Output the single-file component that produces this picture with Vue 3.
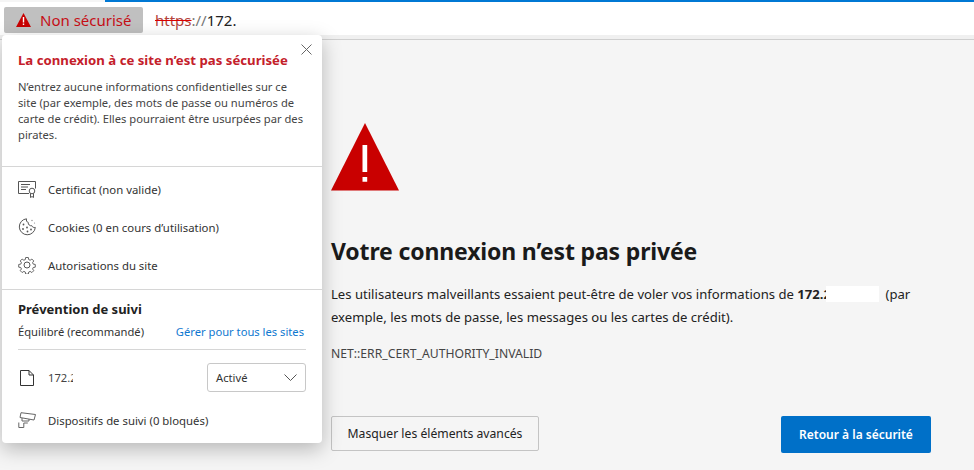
<script setup>
const rows = [
  { icon: 'cert', label: 'Certificat (non valide)' },
  { icon: 'cookie', label: 'Cookies (0 en cours d\u2019utilisation)' },
  { icon: 'gear', label: 'Autorisations du site' }
]
</script>

<template>
  <div class="screen">
    <div class="progress"></div>
    <header class="address">
      <div class="badge">
        <svg class="badge-icon" width="15" height="14" viewBox="0 0 15 14"><path d="M7.5 0 15 14H0Z" fill="#c80000"/><path d="M6.800 4h1.400v5.600H6.800zM6.800 10.600h1.400V12H6.800z" fill="#fff"/></svg>
        <span>Non sécurisé</span>
      </div>
      <div class="url"><s class="scheme">https</s><span class="slashes">://</span>172.</div>
    </header>
    <div class="rule"></div>

    <main class="page">
      <svg class="alert" width="68" height="68" viewBox="0 0 68 68"><path d="M34 0 68 67.500H0Z" fill="#c90000"/><path d="M31.500 22h4.700v27h-4.700zM31.500 54h4.700v4.700h-4.700z" fill="#fff"/></svg>
      <h1>Votre connexion n’est pas privée</h1>
      <p class="lead">Les utilisateurs malveillants essaient peut-être de voler vos informations de <b class="host">172.<span class="clip">2</span><span class="mask"></span></b>(par exemple, les mots de passe, les messages ou les cartes de crédit).</p>
      <p class="code">NET::ERR_CERT_AUTHORITY_INVALID</p>
      <div class="actions">
        <button class="btn ghost">Masquer les éléments avancés</button>
        <button class="btn primary">Retour à la sécurité</button>
      </div>
    </main>

    <aside class="panel">
      <svg class="close" width="11" height="11" viewBox="0 0 11 11"><path d="M.5.5l10 10M10.500.5l-10 10" stroke="#666" fill="none"/></svg>
      <section class="warn">
        <h2>La connexion à ce site n’est pas sécurisée</h2>
        <p>N’entrez aucune informations confidentielles sur ce site (par exemple, des mots de passe ou numéros de carte de crédit). Elles pourraient être usurpées par des pirates.</p>
      </section>
      <section class="links">
        <div v-for="row in rows" :key="row.icon" class="row">
          <svg v-if="row.icon === 'cert'" width="18" height="18" viewBox="0 0 18 18" fill="none" stroke="#555"><path d="M11 13.500H.5v-12h17v7"/><path d="M3 4.500h9M3 7h7M3 9.500h5" /><circle cx="14" cy="11" r="2.800"/><path d="M12.500 13.500v4l1.500-1 1.500 1v-4"/></svg>
          <svg v-else-if="row.icon === 'cookie'" width="18" height="18" viewBox="0 0 18 18" fill="none" stroke="#555"><path d="M8.500.800a8 8 0 1 0 8.800 8.600c-1.500.4-3-.2-3.500-1.700C12 8.200 9.800 6.500 10.300 4.500 8.800 4.200 8 2.400 8.500.8Z"/><circle cx="5.500" cy="6.500" r=".9" fill="#555" stroke="none"/><circle cx="5" cy="11" r=".9" fill="#555" stroke="none"/><circle cx="9" cy="9.500" r=".9" fill="#555" stroke="none"/><circle cx="9.500" cy="13.500" r=".9" fill="#555" stroke="none"/><circle cx="13" cy="11.500" r=".9" fill="#555" stroke="none"/><circle cx="14" cy="2.500" r=".7" fill="#888" stroke="none"/><circle cx="16.500" cy="5" r=".6" fill="#888" stroke="none"/></svg>
          <svg v-else width="18" height="18" viewBox="0 0 18 18" fill="none" stroke="#555"><circle cx="9" cy="9" r="3"/><path d="M7.500.700h3l.4 2.300 1.600.7 1.900-1.300 2.100 2.100-1.300 1.900.7 1.600 2.300.4v3l-2.300.4-.7 1.600 1.300 1.900-2.100 2.100-1.900-1.300-1.600.7-.4 2.300h-3l-.4-2.300-1.600-.7-1.900 1.300-2.100-2.100 1.300-1.900-.7-1.600-2.300-.4v-3l2.300-.4.7-1.600-1.300-1.900 2.100-2.100 1.900 1.300 1.600-.7Z" transform="translate(.9 .9) scale(.9)"/></svg>
          <span>{{ row.label }}</span>
        </div>
      </section>
      <section class="tracking">
        <h3>Prévention de suivi</h3>
        <div class="level">
          <span>Équilibré (recommandé)</span>
          <a>Gérer pour tous les sites</a>
        </div>
        <div class="site">
          <svg width="14" height="16" viewBox="0 0 14 16" fill="none" stroke="#333"><path d="M.5.500h8.500l4.500 4.500v10.500H.5zM9 .500v4.500h4.500"/></svg>
          <span class="host-name">172.2</span>
          <div class="select"><span>Activé</span><svg width="13" height="7" viewBox="0 0 13 7" fill="none" stroke="#555"><path d="M.5.500l6 6 6-6"/></svg></div>
        </div>
        <div class="row blocked">
          <svg width="18" height="16" viewBox="0 0 18 16" fill="none" stroke="#666"><path d="M3 .700 17.500 2.500 16 8 2 5.500Z"/><path d="M4 6v3h7V7M.8 15.500h5V11h4"/><path d="M.8 10.500v5"/></svg>
          <span>Dispositifs de suivi (0 bloqués)</span>
        </div>
      </section>
    </aside>
  </div>
</template>

<style>
html, body { margin: 0; background: #f5f5f5; }
</style>

<style scoped>
.screen {
  position: relative;
  width: 974px;
  height: 470px;
  overflow: hidden;
  display: flex;
  flex-direction: column;
  background: #f5f5f5;
  font-family: "Noto Sans", "Open Sans", sans-serif;
  color: #333;
}
.progress {
  height: 2px;
  margin-left: 105px;
  background: #0078d4;
  flex: none;
}
.address {
  flex: none;
  height: 33px;
  box-sizing: border-box;
  padding: 5px 0 2px 4px;
  background: #fff;
  display: flex;
  align-items: stretch;
}
.badge {
  width: 139px;
  box-sizing: border-box;
  padding-left: 12px;
  display: flex;
  align-items: center;
  gap: 9px;
  background: #c0c0c0;
  border-radius: 2px;
  color: #c60e16;
  font-size: 15px;
}
.url {
  margin-left: 12px;
  display: flex;
  align-items: center;
  font-size: 15px;
  color: #222;
}
.scheme { color: #b5413a; text-decoration-color: #d00; }
.slashes { color: #777; }
.rule {
  flex: none;
  height: 5px;
  box-sizing: border-box;
  background: #f0f0f0;
  border-bottom: 1px solid #cfcfcf;
}
.page {
  flex: 1;
  padding: 83px 43px 0 331px;
  display: flex;
  flex-direction: column;
  color: #1f1f1f;
}
.alert { display: block; flex: none; }
h1 {
  margin: 45px 0 0;
  font-size: 23px;
  line-height: 30px;
  font-weight: 700;
  color: #1a1a1a;
  letter-spacing: -.15px;
}
.lead {
  margin: 17px 0 0;
  font-size: 13.1px;
  line-height: 23px;
  color: #222;
}
.host { font-weight: 700; }
.clip {
  display: inline-block;
  width: 3px;
  overflow: hidden;
  vertical-align: bottom;
}
.mask {
  display: inline-block;
  width: 53px;
  height: 16px;
  margin-right: 6px;
  vertical-align: -3px;
  background: #fff;
}
.code {
  margin: 16px 0 0;
  font-size: 12.2px;
  line-height: 18px;
  color: #444;
}
.actions {
  margin-top: 53px;
  display: flex;
  justify-content: space-between;
  align-items: flex-start;
}
.btn {
  font-family: inherit;
  font-size: 12.2px;
  border-radius: 2px;
  box-sizing: border-box;
}
.ghost {
  width: 208px;
  height: 35px;
  background: #f5f5f5;
  border: 1px solid #c4c4c4;
  color: #222;
}
.primary {
  width: 150px;
  height: 37px;
  background: #0070c8;
  border: 0;
  color: #fff;
  font-weight: 600;
  font-size: 12px;
}
.panel {
  position: absolute;
  left: 2px;
  top: 35px;
  width: 320px;
  height: 408px;
  background: #fff;
  border-radius: 4px;
  box-shadow: 0 6px 20px rgba(0, 0, 0, .26);
  font-size: 11.2px;
  color: #333;
}
.close { position: absolute; left: 299px; top: 9px; }
.warn {
  height: 132px;
  box-sizing: border-box;
  padding: 15px 16px 0;
  border-bottom: 1px solid #d6d6d6;
}
h2 {
  margin: 0;
  font-size: 13.2px;
  line-height: 20px;
  font-weight: 700;
  color: #c4202a;
}
.warn p {
  margin: 9px 0 0;
  line-height: 16px;
  color: #444;
}
.links {
  height: 123px;
  box-sizing: border-box;
  padding-top: 3px;
  border-bottom: 1px solid #d6d6d6;
}
.row {
  height: 38px;
  padding-left: 16px;
  display: flex;
  align-items: center;
  gap: 12px;
  font-size: 11.35px;
}
.tracking { padding: 9px 16px 0; }
h3 {
  margin: 0;
  font-size: 13px;
  line-height: 20px;
  font-weight: 700;
  color: #222;
}
.level {
  margin-top: 3px;
  padding-bottom: 7px;
  display: flex;
  justify-content: space-between;
  line-height: 20px;
  border-bottom: 1px solid #d6d6d6;
}
.level a { color: #0f78d0; margin-right: 2px; }
.site {
  margin-top: 13px;
  padding-left: 2px;
  display: flex;
  align-items: center;
}
.site svg { flex: none; }
.host-name {
  margin-left: 14px;
  width: 25px;
  overflow: hidden;
  white-space: nowrap;
  color: #444;
}
.select {
  margin-left: auto;
  width: 99px;
  height: 29px;
  box-sizing: border-box;
  padding: 0 8px 0 8px;
  border: 1px solid #c8c8c8;
  border-radius: 3px;
  display: flex;
  align-items: center;
  justify-content: space-between;
}
.blocked { padding: 0; margin-top: 9px; }
</style>
